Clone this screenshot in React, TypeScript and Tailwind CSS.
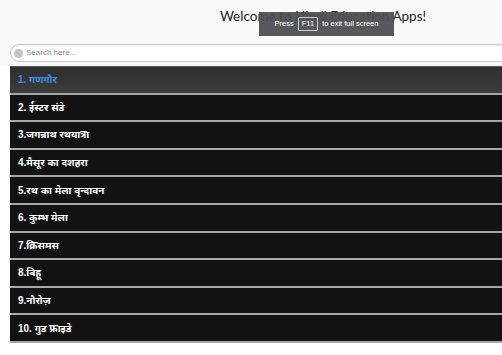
const items = [
  "1. गणगौर",
  "2. ईस्टर संडे",
  "3.जगन्नाथ रथयात्रा",
  "4.मैसूर का दशहरा",
  "5.रथ का मेला वृन्दावन",
  "6. कुम्भ मेला",
  "7.क्रिसमस",
  "8.बिहू",
  "9.नौरोज़",
  "10. गुड फ्राइडे",
];

export default function App() {
  return (
    <div className="w-[502px] h-[355px] overflow-hidden bg-white relative">
      <div className="w-[646px] bg-[#f9f9f9] pb-[4px]">
        <h1 className="text-center text-[13.5px] leading-[20px] pt-[6px] h-[44px] text-[#222] font-['Lato','DejaVu_Sans',sans-serif]">
          Welcome to Hindi Education Apps!
        </h1>
        <div className="mx-[10px] h-[18px] rounded-full border border-[#c8c8c8] bg-white flex items-center px-[3px] shadow-[inset_0_1px_2px_rgba(0,0,0,0.08)]">
          <span className="w-[9px] h-[9px] rounded-full bg-[#c4c4c4] mr-[3px]" />
          <span className="text-[8px] text-[#888] font-['Liberation_Sans',Arial,sans-serif]">Search here...</span>
        </div>
      </div>
      <ul className="w-[636px] ml-[10px] bg-[#999] border-t border-[#555] font-['Liberation_Sans','Noto_Sans',sans-serif]">
        {items.map((t, i) => (
          <li
            key={t}
            className={
              "h-[27.6px] border-b-[2px] border-[#a8a8a8] flex items-center pl-[8px] text-[10px] font-bold " +
              (i === 0
                ? "bg-gradient-to-b from-[#2e2e2e] to-[#3c3c3c] text-[#3a8fe4]"
                : "bg-[#121212] text-white")
            }
          >
            {t}
          </li>
        ))}
      </ul>
      <div className="absolute left-[259px] top-[12px] w-[135px] h-[24px] bg-[#4e4f53]/95 flex items-center justify-center gap-[4px] text-[7.5px] text-white font-['Liberation_Sans',Arial,sans-serif]">
        <span>Press</span>
        <span className="border border-[#ccc] px-[3px] leading-[12px] rounded-[1px]">F11</span>
        <span>to exit full screen</span>
      </div>
    </div>
  );
}
